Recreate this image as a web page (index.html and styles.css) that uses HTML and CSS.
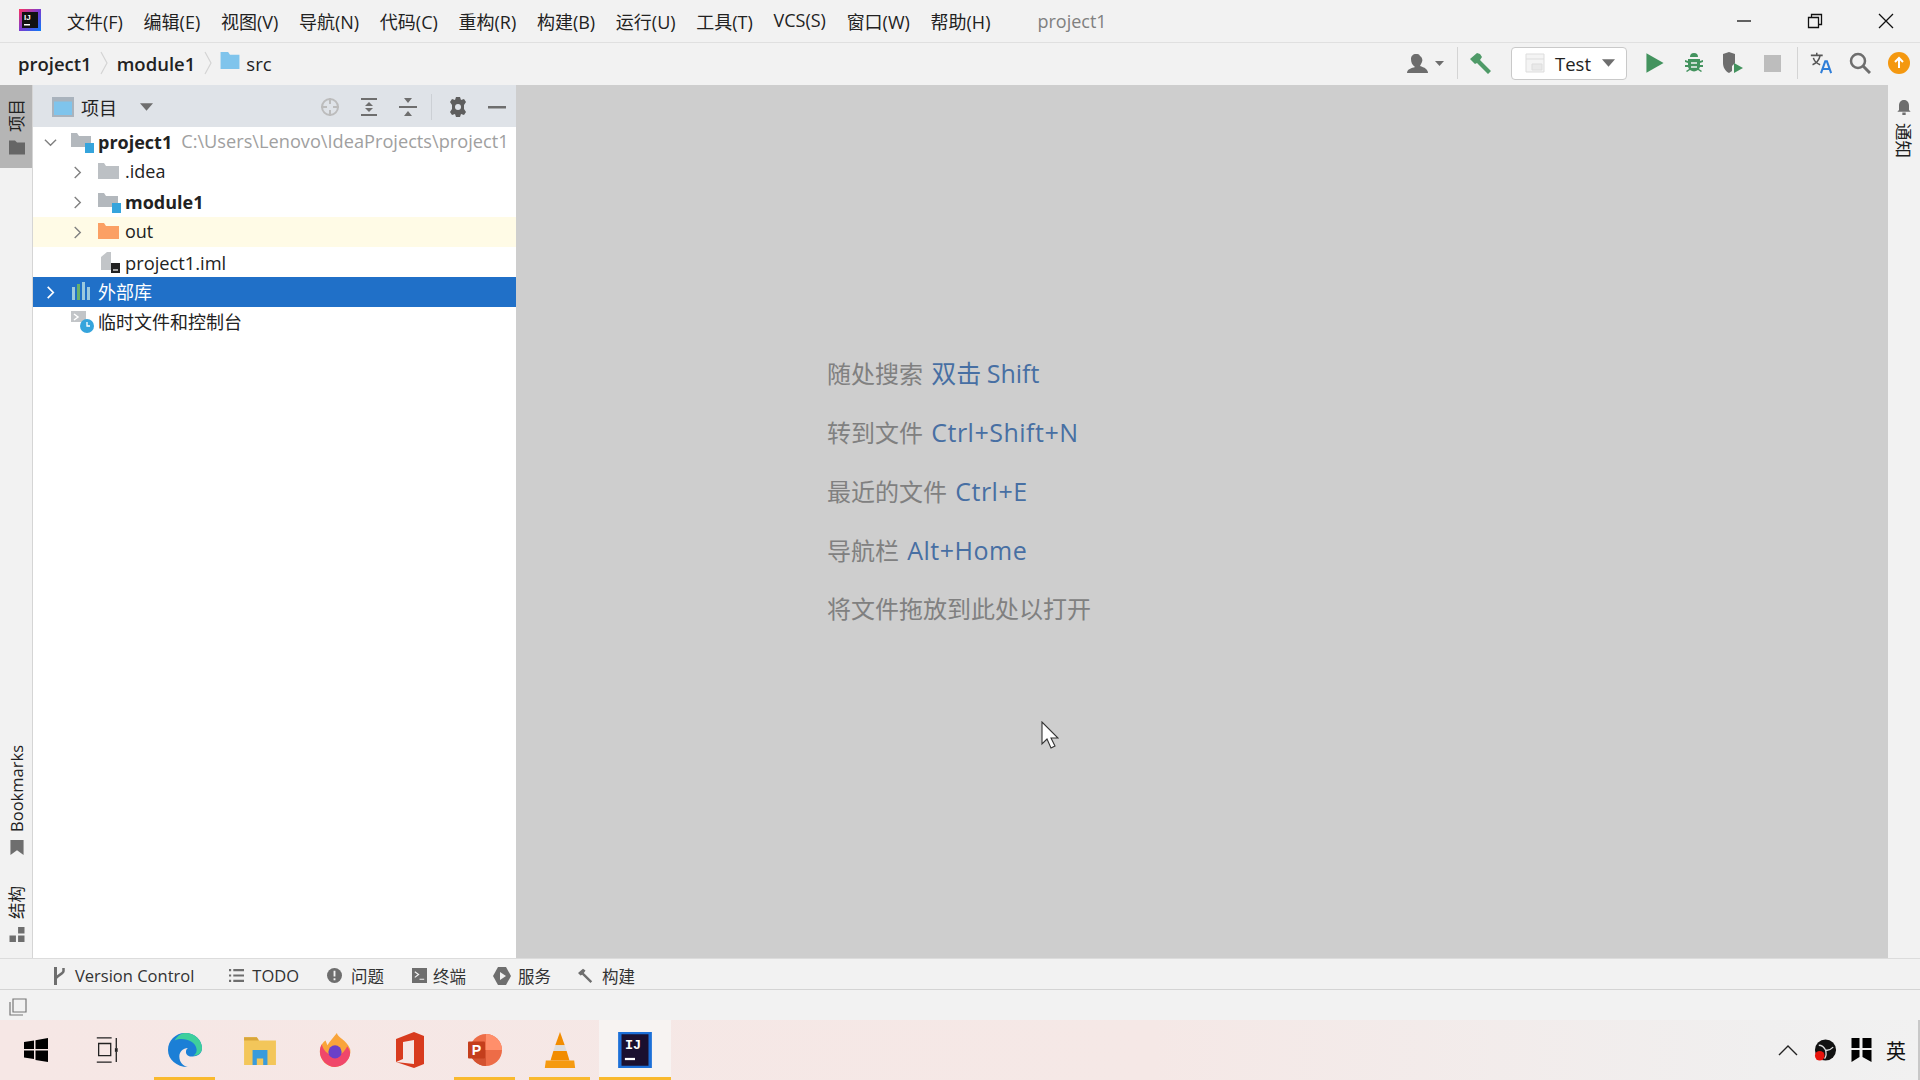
FILE: index.html
```html
<!DOCTYPE html>
<html lang="zh">
<head>
<meta charset="utf-8">
<title>project1</title>
<link rel="stylesheet" href="styles.css">
</head>
<body>
<div class="app">
  <header class="titlebar">
    <svg class="logo" viewBox="0 0 22 22"><defs><linearGradient id="ijg" x1="0" y1="0" x2="1" y2="1"><stop offset="0" stop-color="#fe315d"/><stop offset=".5" stop-color="#7a3bd0"/><stop offset="1" stop-color="#087cfa"/></linearGradient></defs><rect width="22" height="22" fill="url(#ijg)"/><rect x="3" y="3" width="16" height="16" fill="#111"/><text x="5" y="11" class="logo-t">IJ</text><rect x="5" y="15" width="6" height="1.5" fill="#fff"/></svg>
    <nav class="menu">
      <span>文件(F)</span><span>编辑(E)</span><span>视图(V)</span><span>导航(N)</span><span>代码(C)</span><span>重构(R)</span><span>构建(B)</span><span>运行(U)</span><span>工具(T)</span><span>VCS(S)</span><span>窗口(W)</span><span>帮助(H)</span>
    </nav>
    <span class="wintitle">project1</span>
    <div class="winctl">
      <svg viewBox="0 0 16 16"><path d="M1 8h14" stroke="#111" stroke-width="1.3"/></svg>
      <svg viewBox="0 0 16 16"><path d="M1.5 4.500h10v10h-10zM4.500 4.500v-3h10v10h-3" fill="none" stroke="#111" stroke-width="1.3"/></svg>
      <svg viewBox="0 0 16 16"><path d="M1 1l14 14M15 1L1 15" stroke="#111" stroke-width="1.3"/></svg>
    </div>
  </header>

  <div class="navbar">
    <div class="crumbs">
      <b>project1</b><svg class="crumb-sep" viewBox="0 0 8 24"><path d="M1 1l6 11-6 11" fill="none" stroke="#d4d4d4" stroke-width="1.2"/></svg>
      <b>module1</b><svg class="crumb-sep" viewBox="0 0 8 24"><path d="M1 1l6 11-6 11" fill="none" stroke="#d4d4d4" stroke-width="1.2"/></svg>
      <svg class="ic20" viewBox="0 0 20 18"><path d="M0 0h8l2 3h10v15H0z" fill="#7fc4ec"/></svg><span>src</span>
    </div>
    <div class="tools">
      <span class="tool wide"><svg viewBox="0 0 38 20"><path d="M0 20c0-4 5-5 8-6-3-2-4-5-4-8 0-3 2-5 5-5 2 0 3 0 4 2 2 1 3 4 2 6l-2 4c2 1 4 1 6 3 1 1 2 2 2 4z" fill="#6d6d6d"/><path d="M28 8h9l-4.500 5z" fill="#6d6d6d"/></svg></span>
      <i class="vsep"></i>
      <span class="tool"><svg viewBox="0 0 22 22"><path d="M0 7l7-6 3 1 2 3-2 3 11 11-3 3L7 11l-2 1z" fill="#4f9a68"/></svg></span>
      <div class="combo"><svg class="combo-ic" viewBox="0 0 20 20"><path d="M1 1h18v18H1z" fill="#f4f4f4" stroke="#ddd"/><path d="M1 6h18M7 11h10v6H7z" fill="#e9e9e9" stroke="#ddd"/></svg><span>Test</span><svg class="caret" viewBox="0 0 12 7"><path d="M0 0h12L6 7z" fill="#6e6e6e"/></svg></div>
      <span class="tool"><svg viewBox="0 0 16 18"><path d="M1 1l14 8-14 8z" fill="#43935e"/></svg></span>
      <span class="tool"><svg viewBox="0 0 20 22"><path d="M6 5a4 4 0 018 0zM4 7h12v2l3-1v2l-3 1v2h3v2h-3l-1 2 3 2-1 1-3-2a7 7 0 01-8 0l-3 2-1-1 3-2-1-2H1v-2h3v-2L1 10V8l3 1z" fill="#43935e"/><path d="M7 11h6M7 15h6" stroke="#f2f2f2" stroke-width="1.600"/></svg></span>
      <span class="tool"><svg viewBox="0 0 22 22"><path d="M1 2l6-2 6 2v9l-3 3v5l-3 2c-4-2-6-6-6-10z" fill="#6e6e6e"/><path d="M12 11l9 5-9 5z" fill="#43935e"/></svg></span>
      <span class="tool stop"><svg viewBox="0 0 16 16"><rect width="16" height="16" fill="#bdbdbd"/></svg></span>
      <i class="vsep after-stop"></i>
      <span class="tool"><svg viewBox="0 0 26 26"><path d="M1 4h14M8 1v3M3 15c5-2 8-6 9-11M4 7c1 4 5 7 8 8" fill="none" stroke="#555" stroke-width="1.800"/><path d="M13 25l5-14h2l5 14M15 20h8" fill="none" stroke="#2f7ed8" stroke-width="2.400"/></svg></span>
      <span class="tool"><svg viewBox="0 0 22 22"><circle cx="9" cy="9" r="7" fill="none" stroke="#6e6e6e" stroke-width="2.500"/><path d="M14 14l7 7" stroke="#6e6e6e" stroke-width="3"/></svg></span>
      <span class="tool"><svg viewBox="0 0 22 22"><circle cx="11" cy="11" r="11" fill="#f49810"/><path d="M7 10l4-4 4 4M11 7v9" fill="none" stroke="#fff" stroke-width="2"/></svg></span>
    </div>
  </div>

  <main class="workspace">
    <aside class="stripe left">
      <div class="stripe-item active"><span class="vtext up">项目</span><svg viewBox="0 0 16 14"><path d="M0 0h6l2 2h8v12H0z" fill="#666"/></svg></div>
      <div class="stripe-bottom">
        <div class="stripe-item"><span class="vtext up">Bookmarks</span><svg viewBox="0 0 14 16"><path d="M0 0h14v16l-7-5-7 5z" fill="#6e6e6e"/></svg></div>
        <div class="stripe-item"><span class="vtext up">结构</span><svg viewBox="0 0 14 14"><path d="M8 0h6v6H8zM0 8h6v6H0zM8 8h6v6H8z" fill="#6e6e6e"/></svg></div>
      </div>
    </aside>

    <section class="project">
      <div class="panel-head">
        <svg class="ic-view" viewBox="0 0 22 20"><rect x="1" y="1" width="20" height="18" fill="#7fc4ec" stroke="#a9b3bd" stroke-width="2"/><path d="M1 3h20" stroke="#a9b3bd" stroke-width="3"/></svg>
        <span class="head-label">项目</span>
        <svg class="head-caret" viewBox="0 0 12 7"><path d="M0 0h12L6 7z" fill="#6e6e6e"/></svg>
        <div class="head-tools">
          <svg viewBox="0 0 20 20"><circle cx="10" cy="10" r="8" fill="none" stroke="#bcbcbc" stroke-width="2"/><path d="M10 1v6M10 13v6M1 10h6M13 10h6" stroke="#bcbcbc" stroke-width="2"/></svg>
          <svg viewBox="0 0 20 20"><path d="M2 1h16v2H2zM2 17h16v2H2zM10 5l4 4H6zM10 15l-4-4h8z" fill="#6e6e6e"/></svg>
          <svg viewBox="0 0 20 20"><path d="M1 9h18v2H1zM6 1h8l-4 5zM10 14l4 5H6z" fill="#6e6e6e"/></svg>
          <i class="vsep short"></i>
          <svg viewBox="0 0 20 20"><path d="M8 0h4l1 3 3-1 2 3-2 3v4l2 3-2 3-3-1-1 3H8l-1-3-3 1-2-3 2-3V8L2 5l2-3 3 1z" fill="#5e5e5e"/><circle cx="10" cy="10" r="3" fill="#dfe3e8"/></svg>
          <svg viewBox="0 0 20 20"><path d="M1 9h18v2.500H1z" fill="#6e6e6e"/></svg>
        </div>
      </div>
      <div class="row">
        <svg class="chev" viewBox="0 0 14 14"><path d="M1 4l6 6 6-6" fill="none" stroke="#808080" stroke-width="1.500"/></svg>
        <svg class="node" viewBox="0 0 23 22"><path d="M0 2h6l2 3h12v11H0z" fill="#b3b8bd"/><rect x="14" y="12" width="9" height="10" fill="#35a4dc"/></svg>
        <b>project1</b><span class="path">C:\Users\Lenovo\IdeaProjects\project1</span>
      </div>
      <div class="row lv2">
        <svg class="chev" viewBox="0 0 14 14"><path d="M4 1l6 6-6 6" fill="none" stroke="#808080" stroke-width="1.500"/></svg>
        <svg class="node" viewBox="0 0 23 22"><path d="M0 2h6l2 3h13v13H0z" fill="#bcc0c4"/></svg>
        <span>.idea</span>
      </div>
      <div class="row lv2">
        <svg class="chev" viewBox="0 0 14 14"><path d="M4 1l6 6-6 6" fill="none" stroke="#808080" stroke-width="1.500"/></svg>
        <svg class="node" viewBox="0 0 23 22"><path d="M0 2h6l2 3h12v11H0z" fill="#b3b8bd"/><rect x="14" y="12" width="9" height="10" fill="#35a4dc"/></svg>
        <b>module1</b>
      </div>
      <div class="row lv2 excluded">
        <svg class="chev" viewBox="0 0 14 14"><path d="M4 1l6 6-6 6" fill="none" stroke="#808080" stroke-width="1.500"/></svg>
        <svg class="node" viewBox="0 0 23 22"><path d="M0 2h6l2 3h13v13H0z" fill="#fba064"/></svg>
        <span>out</span>
      </div>
      <div class="row lv2">
        <span class="chev"></span>
        <svg class="node" viewBox="0 0 23 22"><path d="M3 6l6-5h4v18H3z" fill="#c2c5c8"/><rect x="13" y="12" width="9" height="10" fill="#222"/><path d="M15 19h5" stroke="#fff" stroke-width="1.200"/></svg>
        <span class="iml">project1.iml</span>
      </div>
      <div class="row selected">
        <svg class="chev" viewBox="0 0 14 14"><path d="M4 1l6 6-6 6" fill="none" stroke="#fff" stroke-width="1.800"/></svg>
        <svg class="node" viewBox="0 0 23 22"><path d="M1 6h3v13H1z" fill="#9bc9dd"/><path d="M6 3h3v16H6z" fill="#69b06c"/><path d="M11 1h3v18h-3z" fill="#9bc9dd"/><path d="M16 6h3v13h-3z" fill="#9bc9dd"/></svg>
        <span>外部库</span>
      </div>
      <div class="row">
        <span class="chev"></span>
        <svg class="node" viewBox="0 0 23 22"><path d="M0 0h15v11H0z" fill="#c2c5c8"/><path d="M3 3l4 3-4 3" fill="none" stroke="#fff" stroke-width="1.500"/><circle cx="16" cy="15" r="7" fill="#35a4dc"/><path d="M16 11v4h3" fill="none" stroke="#fff" stroke-width="1.300"/></svg>
        <span>临时文件和控制台</span>
      </div>
    </section>

    <section class="editor">
      <p>随处搜索 <em class="tight">双击 Shift</em></p>
      <p>转到文件 <em>Ctrl+Shift+N</em></p>
      <p>最近的文件 <em>Ctrl+E</em></p>
      <p>导航栏 <em>Alt+Home</em></p>
      <p>将文件拖放到此处以打开</p>
      <svg class="cursor" viewBox="0 0 18 28"><path d="M1 1v22l5-5 4 9 4-2-4-8h7z" fill="#fff" stroke="#333" stroke-width="1.100"/></svg>
    </section>

    <aside class="stripe right">
      <div class="stripe-item"><svg viewBox="0 0 16 18"><path d="M8 0c4 0 6 3 6 7v5l2 2H0l2-2V7c0-4 2-7 6-7z" fill="#6e6e6e"/><path d="M6 15h4v3H6z" fill="#6e6e6e"/></svg><span class="vtext">通知</span></div>
    </aside>
  </main>

  <div class="toolbar">
    <div class="tw tw-vc"><svg viewBox="0 0 14 20"><path d="M3 1v18" stroke="#6e6e6e" stroke-width="3"/><path d="M11 2v3c0 3-6 4-7 7" fill="none" stroke="#6e6e6e" stroke-width="2.500"/></svg><span>Version Control</span></div>
    <div class="tw tw-todo"><svg viewBox="0 0 14 14"><path d="M0 1h2v2H0zM4 1h10v2H4zM0 6h2v2H0zM4 6h10v2H4zM0 11h2v2H0zM4 11h10v2H4z" fill="#6e6e6e"/></svg><span>TODO</span></div>
    <div class="tw tw-prob"><svg viewBox="0 0 16 16"><circle cx="8" cy="8" r="8" fill="#6e6e6e"/><path d="M8 3v6M8 11v2" stroke="#f2f2f2" stroke-width="2"/></svg><span>问题</span></div>
    <div class="tw tw-term"><svg viewBox="0 0 16 16"><rect width="16" height="16" fill="#6e6e6e"/><path d="M3 4l4 3-4 3M8 12h5" fill="none" stroke="#f2f2f2" stroke-width="1.300"/></svg><span>终端</span></div>
    <div class="tw tw-serv"><svg viewBox="0 0 18 18"><path d="M5 0h8l5 9-5 9H5L0 9z" fill="#6e6e6e"/><path d="M7 5l6 4-6 4z" fill="#f2f2f2"/></svg><span>服务</span></div>
    <div class="tw tw-build"><svg viewBox="0 0 18 18"><path d="M0 6l6-5 3 2-2 3 10 10-2 2L5 8 3 9z" fill="#6e6e6e"/></svg><span>构建</span></div>
  </div>

  <div class="statusbar">
    <svg viewBox="0 0 18 18"><path d="M4 1h13v13H4z" fill="none" stroke="#777" stroke-width="1.200"/><path d="M1 4v13h13" fill="none" stroke="#777" stroke-width="1.200"/></svg>
  </div>

  <footer class="taskbar">
    <div class="task"><svg class="ic-task" viewBox="0 0 24 24"><path d="M0 4l10-1.500V11H0zM11.500 2.300L24 0v11H11.500zM0 12.500h10V21L0 19.600zM11.500 12.500H24V24l-12.500-2z" fill="#000"/></svg></div>
    <div class="task"><svg class="ic-task" viewBox="0 0 24 28"><path d="M1 1h16M1 27h16M3 7h13v13H3zM22 1v11M22 16v11" fill="none" stroke="#222" stroke-width="1.400"/><rect x="20.500" y="12" width="3" height="4" fill="#222"/></svg></div>
    <div class="task on"><svg class="ic-app" viewBox="0 0 36 36"><path d="M18 0c11 0 18 8 18 16 0 6-5 9-10 9-4 0-7-2-7-5 0-2 1-3 2-4-5 0-9 4-9 9 0 6 4 10 9 11C9 36 0 28 0 18 0 8 8 0 18 0z" fill="#1b7fd6"/><path d="M18 0c11 0 18 8 18 16 0 5-4 8-9 8 3-2 4-5 3-8C28 8 16 4 7 8c3-5 7-8 11-8z" fill="#3ecf9c"/></svg></div>
    <div class="task"><svg class="ic-app" viewBox="0 0 32 32"><path d="M1 4h12l2 3h16v23H1z" fill="#f3c65a"/><path d="M1 4h12l2 3H1z" fill="#d9a63a"/><path d="M9 16h14v14h-4v-6h-6v6H9z" fill="#3a9bdc"/></svg></div>
    <div class="task"><svg class="ic-app" viewBox="0 0 36 36"><path d="M2 20c0-6 3-10 6-12l2 5c3-5 6-8 10-13 1 5 10 7 14 17 2 9-7 19-16 19S2 28 2 20z" fill="#f9a43a"/><path d="M2 20c0-4 1-6 2-8 2 8 8 12 14 12s10-4 13-10c2 3 3 5 3 7 0 8-8 15-16 15S2 28 2 20z" fill="#f0476a"/><circle cx="18" cy="20" r="7" fill="#6a40c8"/></svg></div>
    <div class="task"><svg class="ic-app" viewBox="0 0 28 36"><path d="M0 7L18 0l10 4v28l-10 4L0 30l18 2V8L7 10v17L0 30z" fill="#d83b1e"/></svg></div>
    <div class="task on"><svg class="ic-app" viewBox="0 0 36 36"><circle cx="19" cy="18" r="17" fill="#ed6c47"/><path d="M19 1a17 17 0 0117 17H19z" fill="#ff8f6b"/><path d="M2 18h17v17A17 17 0 012 18z" fill="#d35230"/><rect x="0" y="9" width="18" height="18" rx="1" fill="#c43e1c"/><text x="4" y="23" class="ppt-t">P</text></svg></div>
    <div class="task on"><svg class="ic-app" viewBox="0 0 30 38"><path d="M15 0l5 14H10z" fill="#f28c00"/><path d="M10 14h10l2 6H8z" fill="#ddd"/><path d="M8 20h14l3 10H5z" fill="#f28c00"/><path d="M0 30h30l1 8H-1z" fill="#f59a10"/></svg></div>
    <div class="task on active"><svg class="ic-app" viewBox="0 0 30 32"><rect width="30" height="32" fill="#1c6fd8"/><rect x="3" y="2" width="24" height="28" fill="#1a1030"/><text x="6" y="15" class="ij-t">IJ</text><rect x="6" y="23" width="9" height="2" fill="#fff"/></svg></div>
    <div class="tray">
      <svg class="tray-chev" viewBox="0 0 20 12"><path d="M1 11l9-9 9 9" fill="none" stroke="#222" stroke-width="1.400"/></svg>
      <svg class="tray-ic" viewBox="0 0 24 24"><circle cx="12" cy="12" r="11" fill="#111"/><path d="M5 7c4 0 6 3 7 5 3 1 5 0 8-3M12 12c1 3 1 6-1 9" fill="none" stroke="#ddd" stroke-width="1.400"/><circle cx="6" cy="18" r="5" fill="#e8130c"/></svg>
      <svg class="tray-ic" viewBox="0 0 20 24"><path d="M0 0h8v10H0zM11 0h9v10h-9zM0 12h8v7l-8 5zM11 12h9v12l-9-5z" fill="#000"/></svg>
      <span class="ime">英</span>
    </div>
  </footer>
</div>
</body>
</html>
```
FILE: styles.css
```css
* { box-sizing: border-box; }
html, body { margin: 0; height: 100%; overflow: hidden; }
body { font-family: "Open Sans", "Noto Sans CJK SC", sans-serif; color: #222; background: #f2f2f2; }
svg { display: block; flex: none; }

.app { width: 1920px; height: 1080px; display: flex; flex-direction: column; }

.titlebar { height: 43px; flex: none; display: flex; align-items: center; background: #f2f2f2; border-bottom: 1px solid #e0e0e0; padding-left: 19px; }
.logo { width: 22px; height: 22px; margin-top: -2px; }
.logo-t { font: bold 8px "Liberation Sans", sans-serif; fill: #fff; }
.menu { display: flex; gap: 20.700px; margin-left: 26px; font-size: 18px; white-space: nowrap; }
.wintitle { margin-left: 47px; font-size: 18px; color: #808080; }
.winctl { margin-left: auto; display: flex; align-items: center; gap: 55px; padding-right: 26px; }
.winctl svg { width: 16px; height: 16px; }

.navbar { height: 42px; flex: none; display: flex; align-items: center; background: #f2f2f2; padding: 0 0 2px 18px; }
.crumbs { display: flex; align-items: center; font-size: 18.500px; }
.crumbs b { font-weight: 600; }
.crumb-sep { width: 8px; height: 24px; margin: 0 8.500px; }
.ic20 { width: 20px; height: 17px; margin: -6px 6px 0 0; }
.tools { margin-left: auto; display: flex; align-items: center; padding-right: 2px; }
.tool { width: 39px; height: 32px; display: flex; align-items: center; justify-content: center; }
.tool svg { width: 22px; height: 22px; }
.tool.stop svg { width: 17px; height: 17px; }
.tool.wide { width: 50px; margin-right: 2px; }
.tool.wide svg { width: 38px; height: 20px; }
.vsep { display: block; width: 1px; height: 32px; background: #d4d4d4; margin: 0 3px 0 4px; flex: none; }
.vsep.after-stop { margin: 0 3px 0 5.500px; }
.combo { width: 116px; height: 33px; margin: 0 8.500px 0 11px; display: flex; align-items: center; background: #fff; border: 1px solid #c9c9c9; border-radius: 4px; padding-left: 13px; font-size: 18.500px; }
.combo-ic { width: 20px; height: 20px; margin-right: 10px; }
.combo .caret { width: 13px; height: 8px; margin-left: 11px; }

.workspace { flex: 1; min-height: 0; display: flex; }
.stripe { width: 33px; flex: none; display: flex; flex-direction: column; background: #f2f2f2; }
.stripe.left { border-right: 1px solid #d5d5d5; }
.stripe.right { width: 32px; }
.stripe-item { display: flex; flex-direction: column; align-items: center; gap: 8px; padding: 14px 0 8px 2px; font-size: 16.500px; }
.stripe-item svg { width: 16px; height: 15px; }
.stripe-item.active { background: #b5b5b5; height: 83px; }
.stripe-bottom { margin-top: auto; padding-bottom: 8px; display: flex; flex-direction: column; gap: 9px; }
.vtext { writing-mode: vertical-rl; text-orientation: sideways; line-height: 20px; white-space: nowrap; }
.vtext.up { transform: rotate(180deg); }

.project { width: 483px; flex: none; background: #fff; font-size: 18px; }
.panel-head { height: 42px; display: flex; align-items: center; background: #dfe3e8; padding: 2px 0 0 19px; }
.ic-view { width: 22px; height: 20px; }
.head-label { margin-left: 7px; }
.head-caret { width: 13px; height: 8px; margin-left: 23px; }
.head-tools { margin-left: auto; display: flex; align-items: center; gap: 19px; padding-right: 9px; }
.head-tools svg { width: 20px; height: 20px; }
.vsep.short { height: 26px; background: #ccd0d5; margin: 0 -3px 0 -6px; }

.row { height: 30px; display: flex; align-items: center; padding-left: 11px; white-space: nowrap; }
.row.lv2 { padding-left: 38px; }
.row b { font-weight: 700; }
.row span:not(.chev) { position: relative; top: -1px; }
.row span.iml { top: 0; font-size: 18.300px; }
.chev { width: 13px; height: 13px; margin-right: 14px; flex: none; }
.node { width: 23px; height: 22px; margin-right: 4px; }
.path { margin-left: 9px; color: #a0a0a0; font-size: 18.200px; }
.excluded { background: #fffbe6; }
.selected { background: #2070c8; color: #fff; }

.editor { position: relative; flex: 1; background: #cecece; padding: 273px 0 0 311px; font-size: 24px; color: #808080; }
.editor p { margin: 0; height: 59px; line-height: 30px; white-space: nowrap; }
.editor em { font-style: normal; color: #476fa3; font-size: 25px; letter-spacing: .5px; margin-left: 2px; }
.editor em.tight { letter-spacing: 0; word-spacing: -1px; }
.cursor { position: absolute; left: 525px; top: 636px; width: 18px; height: 28px; }

.stripe.right .stripe-item { padding: 15px 0 8px; gap: 8px; font-size: 17.500px; }

.toolbar { height: 32px; flex: none; display: flex; align-items: center; padding: 3px 0 0 52px; background: #f2f2f2; border-top: 1px solid #dcdcdc; border-bottom: 1px solid #d4d4d4; font-size: 16.500px; color: #333; }
.tw { display: flex; align-items: center; gap: 9px; }
.tw svg { width: 15px; height: 15px; }
.tw-vc { gap: 8px; }
.tw-vc svg { height: 20px; }
.tw-todo { margin-left: 35px; gap: 8px; }
.tw-prob { margin-left: 28px; }
.tw-term { margin-left: 28px; gap: 6px; }
.tw-serv { margin-left: 27px; gap: 7px; }
.tw-serv svg { width: 18px; height: 18px; }
.tw-build { margin-left: 27px; }

.statusbar { height: 30px; flex: none; display: flex; align-items: center; padding: 4px 0 0 9px; background: #f2f2f2; }
.statusbar svg { width: 18px; height: 18px; }

.taskbar { height: 60px; flex: none; display: flex; align-items: center; background: linear-gradient(90deg, #f6e7e5 0%, #f5e8e6 60%, #f0efef 92%, #f1f1f1 100%); padding-left: 3px; }
.task { width: 61px; height: 60px; margin-right: 14px; display: flex; align-items: center; justify-content: center; border-bottom: 3px solid transparent; padding-top: 3px; }
.task:nth-child(1) { margin-right: 12px; padding-left: 4px; }
.task:nth-child(2) { margin-right: 17px; }
.task.on { border-bottom-color: #f9b92e; }
.task.active { background: #f7f3f2; width: 72px; margin-left: -5px; }
.ic-task { width: 24px; height: 26px; }
.ic-app { width: 34px; height: 36px; }
.ppt-t { font: bold 15px "Liberation Sans", sans-serif; fill: #fff; }
.ij-t { font: bold 12px "Liberation Mono", monospace; fill: #fff; }
.tray { margin-left: auto; height: 60px; display: flex; align-items: center; padding-right: 12px; gap: 13px; border-right: 2px solid #c8c8c8; }
.tray-chev { width: 20px; height: 12px; margin-right: 3px; }
.tray-ic { width: 23px; height: 24px; }
.ime { font-size: 20px; margin-left: 0; color: #111; }
```
